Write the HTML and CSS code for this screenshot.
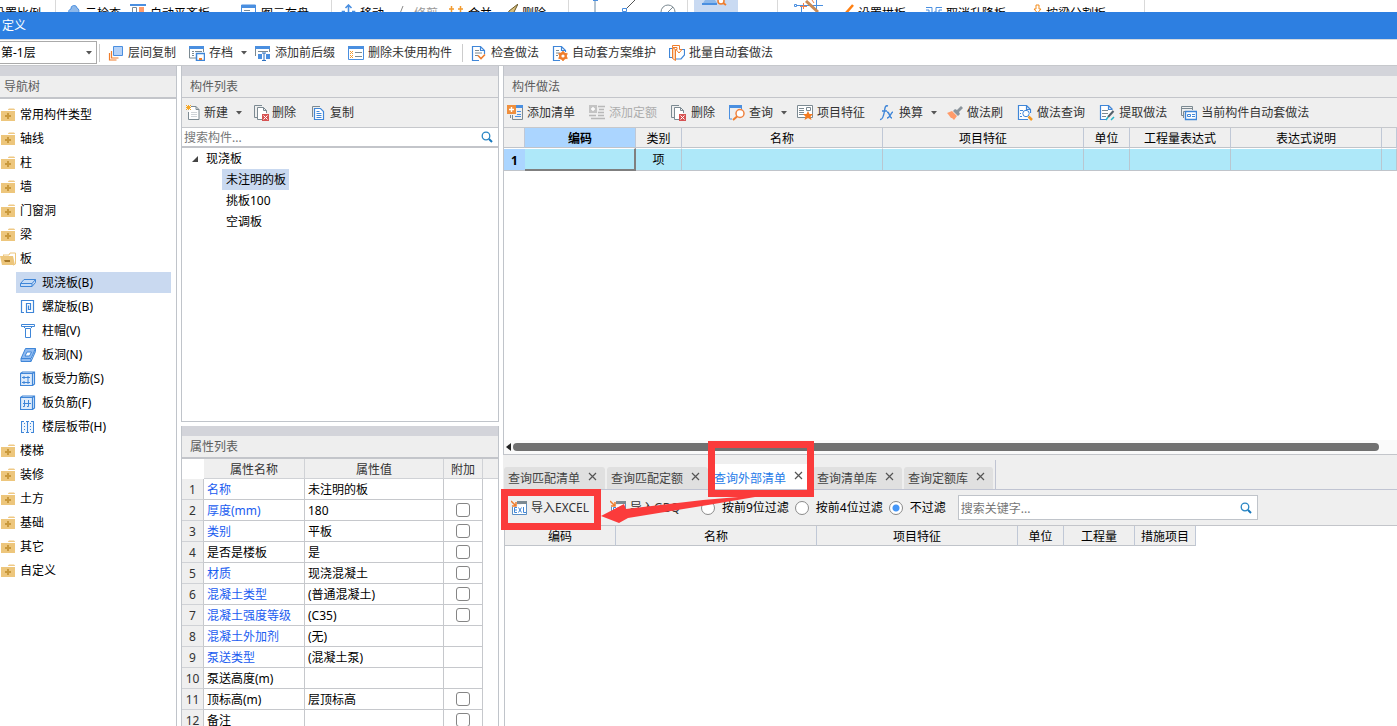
FILE: index.html
```html
<!DOCTYPE html>
<html lang="zh-CN">
<head>
<meta charset="utf-8">
<title>定义</title>
<link rel="stylesheet" href="styles.css">
</head>
<body>
<svg class="sprite" aria-hidden="true">
  <symbol id="folder" viewBox="0 0 16 16"><path d="M8 2.500l1-1h5l1 1V3H8z" fill="#efc985"/><path d="M1 4h14v10H1z" fill="#edc67c"/><path d="M7 6h2v2h2v2H9v2H7v-2H5V8h2z" fill="#c9993d"/></symbol>
  <symbol id="folder-open" viewBox="0 0 16 16"><path d="M3 4h6l1-2h5.500v11l-2 1z" fill="#fff" stroke="#edc67c"/><path d="M0 5h13l2 9H2z" fill="#edc67c"/><path d="M4 9h6v2H5z" fill="#a87a2a"/></symbol>
  <symbol id="search" viewBox="0 0 12 12"><circle cx="5" cy="5" r="3.800" fill="none" stroke="#2a86c4" stroke-width="1.300"/><path d="M8 8l3 3" stroke="#1778bd" stroke-width="2"/></symbol>
  <symbol id="caret" viewBox="0 0 6 4"><path d="M0 0h6L3 3.500z" fill="#555"/></symbol>
  <symbol id="close" viewBox="0 0 9 9"><path d="M1 1l7 7M8 1L1 8" stroke="#555" stroke-width="1.200"/></symbol>
  <symbol id="delete" viewBox="0 0 16 16"><path d="M3 12.500H.5V.5H8" fill="none" stroke="#7c8a92"/><path d="M8 14.500H3.500V2.500H9.500L12.500 5.500V8M9.500 2.500v3h3" fill="#fff" stroke="#7c8a92"/><path d="M8 9h7v7H8z" fill="#d65353"/><path d="M9.500 10.500l4 4M13.500 10.500l-4 4" stroke="#fff"/></symbol>
</svg>

<div class="ribbon" aria-hidden="true">
  <div class="rgroup rg-scale"><span>设置比例</span></div>
  <div class="rgroup rg-check">
    <span class="ritem"><svg width="13" height="12" viewBox="0 0 13 12"><path d="M1 9a3 3 0 0 1 2-4 3 3 0 0 1 6-1 3 3 0 0 1 1 5v3H1z" fill="#8db8ea" stroke="#4a8fe0"/></svg>云检查</span>
    <span class="ritem"><svg width="16" height="12" viewBox="0 0 16 12"><path d="M0 1h16" stroke="#4a8fe0" stroke-width="2"/><path d="M2.500 3.500h4V12h-4z" fill="none" stroke="#7c8a92"/><path d="M9 3h5v9H9z" fill="#ff9b6a"/></svg>自动平齐板</span>
    <span class="ritem"><svg width="16" height="12" viewBox="0 0 16 12"><path d="M.5 1h14v11H.5z" fill="#fff" stroke="#4a8fe0"/><path d="M0 1h15v3H0z" fill="#4a8fe0"/><path d="M3 6.500h6M3 9.500h6" stroke="#7c8a92"/></svg>图元存盘</span>
  </div>
  <div class="rgroup rg-edit">
    <span class="ritem"><svg width="15" height="12" viewBox="0 0 15 12"><path d="M7.500 1v8M4.500 4l3-3 3 3M1.500 12V7.500H4M13.500 12V7.500H11" fill="none" stroke="#4a8fe0" stroke-width="1.600"/></svg>移动</span>
    <span class="ritem dim"><svg width="12" height="12" viewBox="0 0 12 12"><path d="M5 2L1 12" stroke="#8a8a8a"/></svg>修剪</span>
    <span class="ritem"><svg width="15" height="12" viewBox="0 0 15 12"><path d="M0 5h5M2.500 2v6M9 5h5M11.500 2v6" stroke="#f29a2e" stroke-width="1.500"/></svg>合并</span>
    <span class="ritem"><svg width="12" height="12" viewBox="0 0 12 12"><path d="M12 0L3 7l-2 5h5z" fill="#d8bd7a" stroke="#6b5a2a"/></svg>删除</span>
  </div>
  <div class="rgroup rg-draw">
    <svg width="10" height="12" viewBox="0 0 10 12"><path d="M5 0v12" stroke="#6b8ba5"/><path d="M3 0h5v1H3z" fill="#4a8fe0"/></svg>
    <svg width="16" height="12" viewBox="0 0 16 12"><path d="M4 9L13 0" stroke="#555"/><path d="M.5 8.500h4v3h-4z" fill="#fff" stroke="#4a8fe0"/></svg>
    <svg width="16" height="12" viewBox="0 0 16 12"><circle cx="8" cy="12" r="7" fill="none" stroke="#7c8a92"/><path d="M8 12l5-5" stroke="#7c8a92"/></svg>
  </div>
  <div class="rgroup rg-pick"><span class="picked"><svg width="26" height="10" viewBox="0 0 26 10"><path d="M3 0h10l2 3H1z" fill="#8db8ea"/><path d="M0 4h15" stroke="#4a8fe0" stroke-width="2"/><circle cx="19" cy="1" r="3" fill="#fff" stroke="#ef7d2c" stroke-width="1.500"/><path d="M21 3l3 2" stroke="#ef7d2c" stroke-width="2"/></svg></span></div>
  <div class="rgroup rg-slab">
    <span class="ritem"><svg width="29" height="12" viewBox="0 0 29 12"><path d="M1 5.500h28M7.500 12V7M22.500 0v12" stroke="#4a8fe0"/><path d="M.5 4.500h2v2h-2z" fill="#fff" stroke="#4a8fe0"/><path d="M12 1l12 11" stroke="#c98a55" stroke-width="3"/><path d="M9.500 3v6M6 6.500h7M18 0l2 3" stroke="#f0804a"/></svg></span>
    <span class="ritem"><svg width="9" height="12" viewBox="0 0 9 12"><path d="M8 1L1 9" stroke="#ff7f11" stroke-width="2.500"/></svg>设置拱板</span>
    <span class="ritem"><svg width="16" height="12" viewBox="0 0 16 12"><path d="M0 3.500h6V12M3 12V6H0M16 3.500h-6V8H8M13 12V6h3" fill="none" stroke="#4a8fe0"/></svg>取消升降板</span>
    <span class="ritem"><svg width="9" height="12" viewBox="0 0 9 12"><path d="M3 1h3v4h2L4.500 9 1 5h2z" fill="#fff" stroke="#f28c1c"/></svg>按梁分割板</span>
  </div>
</div>

<header class="titlebar"><h1>定义</h1></header>

<div class="toolbar main-tools">
  <label class="floor"><select aria-label="楼层"><option>第-1层</option></select><svg class="caret" width="6" height="4"><use href="#caret"/></svg></label>
  <i class="sep"></i>
  <button><svg width="16" height="16" viewBox="0 0 16 16"><path d="M1.500 8v7h7M3.500 6v7h7" fill="none" stroke="#ef7d2c" stroke-width="1.200"/><path d="M5.500 1.500h9v9h-9z" fill="#b5d2f8" stroke="#4a8fe0"/></svg>层间复制</button>
  <button class="menu"><svg width="16" height="16" viewBox="0 0 16 16"><path d="M.5 2v11H8M14.500 2v5" fill="none" stroke="#7c8a92"/><path d="M0 1h15v3H0z" fill="#4a8fe0"/><path d="M3 6.500h2M6 6.500h7M3 8.500h2M3 10.500h2" stroke="#7c8a92"/><path d="M7.500 8.500h8v7h-8z" fill="#fff" stroke="#3f86d8" stroke-width="1.500"/><path d="M10 13h3v2h-3z" fill="#ef7d2c"/></svg>存档<svg class="caret" width="6" height="4"><use href="#caret"/></svg></button>
  <button><svg width="16" height="16" viewBox="0 0 16 16"><path d="M.5 2v9M14.500 2v5" stroke="#7c8a92"/><path d="M0 1h15v3H0z" fill="#4a8fe0"/><path d="M3 6.500h10" stroke="#7c8a92"/><path d="M3 9h4v5H3zM11 9h4v5h-4z" fill="#4a8fe0"/><path d="M9 8v8M7 8h4M7 15.500h4" stroke="#2b6fbf"/></svg>添加前后缀</button>
  <button><svg width="16" height="16" viewBox="0 0 16 16"><path d="M.5 1.500h15v13H.5z" fill="#fff" stroke="#4a8fe0"/><path d="M0 1h16v3H0z" fill="#4a8fe0"/><path d="M2 6l3 3M5 6L2 9M2 10l3 3M5 10l-3 3" stroke="#f29a2e"/><path d="M7 7.500h7M7 11.500h7" stroke="#7c8a92"/></svg>删除未使用构件</button>
  <i class="sep"></i>
  <button><svg width="16" height="16" viewBox="0 0 16 16"><path d="M8 15.500H1.500V1.500h8l4 4V9M9.500 1.500v4h4" fill="#fff" stroke="#3f86d8" stroke-width="1.200"/><path d="M4 5.500h4M4 8h7M4 10.500h3" stroke="#7c8a92"/><path d="M7 10.500l3 3 4-4" fill="none" stroke="#ef7d2c" stroke-width="1.600"/></svg>检查做法</button>
  <button><svg width="16" height="16" viewBox="0 0 16 16"><path d="M8 15.500H1.500V1.500h8l4 4V7M9.500 1.500v4h4" fill="#fff" stroke="#3f86d8" stroke-width="1.200"/><path d="M4 5.500h3M4 8h4M4 10.500h2" stroke="#7c8a92"/><circle cx="11" cy="11" r="2.800" fill="#fff" stroke="#ef7d2c" stroke-width="2.400"/><path d="M11 6v2M11 14v2M6.500 8.500l2 1M13.500 12.500l2 1M15.500 8.500l-2 1M8.500 12.500l-2 1" stroke="#ef7d2c" stroke-width="1.600"/></svg>自动套方案维护</button>
  <button><svg width="16" height="16" viewBox="0 0 16 16"><path d="M3 3.500H.5v9H3M12 4.500h3.500V10L12 14H7" fill="none" stroke="#3f86d8" stroke-width="1.200"/><path d="M3.500 2.500l3 2v11l-3-2z" fill="#f9d3b5" stroke="#ef7d2c"/><path d="M3.500 2.500V.5h7v4h2.500L10 8 7 4.500h1v-2H4" fill="#fff" stroke="#ef7d2c"/></svg>批量自动套做法</button>
</div>

<main class="workspace">
  <nav class="panel nav">
    <div class="band"></div>
    <h2 class="thick">导航树</h2>
    <ul class="navtree">
      <li><svg><use href="#folder"/></svg>常用构件类型</li>
      <li><svg><use href="#folder"/></svg>轴线</li>
      <li><svg><use href="#folder"/></svg>柱</li>
      <li><svg><use href="#folder"/></svg>墙</li>
      <li><svg><use href="#folder"/></svg>门窗洞</li>
      <li><svg><use href="#folder"/></svg>梁</li>
      <li><svg><use href="#folder-open"/></svg>板</li>
      <li class="child"><span class="leaf on"><svg viewBox="0 0 16 16"><path d="M.5 8.500L4 4.500h11.500L12 8.500zM.5 8.500v3H12v-3M12 11.500l3.500-4v-3" fill="#c5dcf7" stroke="#3f86d8"/></svg>现浇板(B)</span></li>
      <li class="child"><span class="leaf"><svg viewBox="0 0 16 16"><path d="M4 13.500H1.500v-12h12v12h-7v-9h4v6h-2v-4" fill="none" stroke="#3f86d8" stroke-width="1.200"/></svg>螺旋板(B)</span></li>
      <li class="child"><span class="leaf"><svg viewBox="0 0 16 16"><path d="M1.500 1.500h13v2h-13zM3.500 3.500l2 2h5l2-2M5.500 5.500v9h5v-9" fill="#fff" stroke="#3f86d8"/></svg>柱帽(V)</span></li>
      <li class="child"><span class="leaf"><svg viewBox="0 0 16 16"><path d="M1 11.500L5.500 1.500h10L11 11.500zM1 11.500v3h10v-3M11 14.500l4.500-10v-3" fill="#8fbaf0" stroke="#3f86d8"/><path d="M5 9l2-4h4.500L9.500 9z" fill="#fff" stroke="#3f86d8"/></svg>板洞(N)</span></li>
      <li class="child"><span class="leaf"><svg viewBox="0 0 16 16"><path d="M.5 2.500h12v12H.5zM.5 2.500l2-1.500h12v12l-2 1.500M12.500 2.500l2-1.500" fill="#deebfb" stroke="#3f86d8" stroke-width="1.200"/><path d="M2 6.500h8M2 11.500h8M4 5v3M8 5v8M4 10v3" stroke="#3f86d8"/></svg>板受力筋(S)</span></li>
      <li class="child"><span class="leaf"><svg viewBox="0 0 16 16"><path d="M.5 2.500h12v12H.5zM.5 2.500l2-1.500h12v12l-2 1.500M12.500 2.500l2-1.500" fill="#deebfb" stroke="#3f86d8" stroke-width="1.200"/><path d="M4.500 5v6.500H3M8.500 5v6.500H7M3 8.500h8" stroke="#3f86d8" fill="none"/></svg>板负筋(F)</span></li>
      <li class="child"><span class="leaf"><svg viewBox="0 0 16 16"><path d="M1 3h13v10H1z" fill="#eef5fd"/><path d="M1.500 3v10M7.500 3v10M13.500 3v10M1 2.500h3M6 2.500h3M11 2.500h3M1 13.500h3M6 13.500h3M11 13.500h3" stroke="#3f86d8"/><path d="M4.500 4v9M10.500 4v9" stroke="#3f86d8" stroke-dasharray="1 2"/></svg>楼层板带(H)</span></li>
      <li><svg><use href="#folder"/></svg>楼梯</li>
      <li><svg><use href="#folder"/></svg>装修</li>
      <li><svg><use href="#folder"/></svg>土方</li>
      <li><svg><use href="#folder"/></svg>基础</li>
      <li><svg><use href="#folder"/></svg>其它</li>
      <li><svg><use href="#folder"/></svg>自定义</li>
    </ul>
  </nav>

  <div class="middle">
    <section class="panel components">
      <div class="band"></div>
      <h2>构件列表</h2>
      <div class="toolbar">
        <button class="menu"><svg width="16" height="16" viewBox="0 0 16 16"><path d="M5 1.500h5l3 3v10H2.500V7M10 1.500v3h3" fill="#fff" stroke="#7c8a92"/><path d="M5 7.500h6M5 9.500h6M5 11.500h6" stroke="#d0d4d8"/><path d="M0 0l5 5M5 0L0 5M2.500 0v5M0 2.500h5" stroke="#f5a623"/></svg>新建<svg class="caret" width="6" height="4"><use href="#caret"/></svg></button>
        <button><svg width="16" height="16"><use href="#delete"/></svg>删除</button>
        <button><svg width="16" height="16" viewBox="0 0 16 16"><path d="M.5 12V1.500H8" fill="none" stroke="#7c8a92"/><path d="M2.500 3.500h6l3 3v8h-9z" fill="#fff" stroke="#3f86d8" stroke-width="1.200"/><path d="M4.500 6.500h3M4.500 8.500h5M4.500 10.500h5M4.500 12.500h5" stroke="#3f86d8"/></svg>复制</button>
      </div>
      <label class="find"><input type="text" placeholder="搜索构件..." aria-label="搜索构件"><svg width="12" height="12"><use href="#search"/></svg></label>
      <ul class="comptree">
        <li><svg width="8" height="8" viewBox="0 0 8 8"><path d="M7 1v6H1z" fill="#444"/></svg>现浇板</li>
        <li class="child"><span class="on">未注明的板</span></li>
        <li class="child"><span>挑板100</span></li>
        <li class="child"><span>空调板</span></li>
      </ul>
    </section>

    <section class="panel props">
      <div class="band"></div>
      <h2 class="thick">属性列表</h2>
      <div class="props-body">
      <table class="proptable">
        <colgroup><col class="w22"><col class="w101"><col class="w139"><col class="w39"><col></colgroup>
        <thead><tr><td></td><th>属性名称</th><th>属性值</th><th>附加</th><th class="rest"></th></tr></thead>
        <tbody>
          <tr><th>1</th><td class="link">名称</td><td>未注明的板</td><td></td></tr>
          <tr><th>2</th><td class="link">厚度(mm)</td><td>180</td><td><input type="checkbox" aria-label="厚度附加"></td></tr>
          <tr><th>3</th><td class="link">类别</td><td>平板</td><td><input type="checkbox" aria-label="类别附加"></td></tr>
          <tr><th>4</th><td>是否是楼板</td><td>是</td><td><input type="checkbox" aria-label="是否是楼板附加"></td></tr>
          <tr><th>5</th><td class="link">材质</td><td>现浇混凝土</td><td><input type="checkbox" aria-label="材质附加"></td></tr>
          <tr><th>6</th><td class="link">混凝土类型</td><td>(普通混凝土)</td><td><input type="checkbox" aria-label="混凝土类型附加"></td></tr>
          <tr><th>7</th><td class="link">混凝土强度等级</td><td>(C35)</td><td><input type="checkbox" aria-label="混凝土强度等级附加"></td></tr>
          <tr><th>8</th><td class="link">混凝土外加剂</td><td>(无)</td><td></td></tr>
          <tr><th>9</th><td class="link">泵送类型</td><td>(混凝土泵)</td><td></td></tr>
          <tr><th>10</th><td>泵送高度(m)</td><td></td><td></td></tr>
          <tr><th>11</th><td>顶标高(m)</td><td>层顶标高</td><td><input type="checkbox" aria-label="顶标高附加"></td></tr>
          <tr><th>12</th><td>备注</td><td></td><td><input type="checkbox" aria-label="备注附加"></td></tr>
        </tbody>
      </table>
      </div>
    </section>
  </div>

  <div class="right">
    <section class="methods">
      <div class="band"></div>
      <h2>构件做法</h2>
      <div class="toolbar">
        <button><svg width="16" height="16" viewBox="0 0 16 16"><path d="M8 .5h7.500v3M15.500 3v11.500h-10V10M3.500 10v3" fill="none" stroke="#7c8a92"/><path d="M9 0h7v3H9z" fill="#4a8fe0"/><path d="M10 6.500h4M10 9.500h4M8 11.500h6" stroke="#4a8fe0"/><path d="M0 0h9v9H0z" fill="#ef8f3d"/><path d="M4.500 2v5M2 4.500h5" stroke="#fff" stroke-width="1.400"/></svg>添加清单</button>
        <button disabled><svg width="16" height="16" viewBox="0 0 16 16"><path d="M0 0h8v8H0z" fill="#c4c4c4"/><path d="M4 2v4M2 4h4" stroke="#fff" stroke-width="1.400"/><path d="M9 1.500h7M10 4.500h5M9 7.500h6M0 10.500h7M9 10.500h6M2 13.500h14" stroke="#b8b8b8" stroke-width="1.500"/></svg>添加定额</button>
        <button><svg width="16" height="16"><use href="#delete"/></svg>删除</button>
        <button class="menu"><svg width="16" height="16" viewBox="0 0 16 16"><path d="M.5 1v13H3M12.500 1v3" stroke="#4a8fe0" fill="none"/><path d="M0 0h13v3H0z" fill="#4a8fe0"/><circle cx="11" cy="8.500" r="4" fill="#fff" stroke="#ef8240" stroke-width="1.500"/><path d="M8 11.500L4 15" stroke="#ef7d2c" stroke-width="2"/></svg>查询<svg class="caret" width="6" height="4"><use href="#caret"/></svg></button>
        <button><svg width="16" height="16" viewBox="0 0 16 16"><path d="M.5.5h15v12H.5z" fill="#fff" stroke="#7c8a92"/><path d="M2 3.500h5M2 5.500h5M2 7.500h5M2 9.500h5M9.500 2.500h4v3h-4z" fill="none" stroke="#7c8a92"/><path d="M11 6l1.500 3H16l-2.500 2.500 1 3.500-3.500-2-3.500 2 1-3.500L6 9h3.500z" fill="#f47b20"/></svg>项目特征</button>
        <button class="menu"><svg width="16" height="16" viewBox="0 0 16 16"><path d="M9 1C6 0 6 3 5.500 6S4 15 1 14.500M3 6h5M8 7c3 0 2 6 5 6M14 7c-2 0-3 6-6 6" fill="none" stroke="#3f86d8" stroke-width="1.400"/></svg>换算<svg class="caret" width="6" height="4"><use href="#caret"/></svg></button>
        <button><svg width="16" height="16" viewBox="0 0 16 16"><path d="M14 1l2 2-4 4 1 2-2 2-5-5 2-2 2 1z" fill="#8a949c"/><path d="M5 6l5 5-3 4-2-2-1 0-3-4-1-1z" fill="#ff9b6a"/></svg>做法刷</button>
        <button><svg width="16" height="16" viewBox="0 0 16 16"><path d="M11 14.500H1.500V.5h8l4 4V8M9.500.5v4h4" fill="#fff" stroke="#3f86d8" stroke-width="1.200"/><path d="M3 5.500h3M3 8.500h1M3 11.500h2" stroke="#3f86d8"/><circle cx="9" cy="8.500" r="3.200" fill="#fff" stroke="#3f86d8"/><path d="M11.500 11.500L15 15" stroke="#f59a23" stroke-width="2.500"/></svg>做法查询</button>
        <button><svg width="16" height="16" viewBox="0 0 16 16"><path d="M7 14.500H1.500V.5h8l4 4M9.500.5v4h4" fill="#fff" stroke="#3f86d8" stroke-width="1.200"/><path d="M3 5.500h6M3 8.500h6M3 11.500h4" stroke="#7c8a92"/><path d="M14.500 6L9 12" stroke="#53616b" stroke-width="2"/><path d="M9 12l-2 3M12 15l3-3" stroke="#26b5c8" stroke-width="1.500"/></svg>提取做法</button>
        <button><svg width="16" height="16" viewBox="0 0 16 16"><path d="M3 10.500H.5V1.500h11V5M0 3.500h12M2.500 13V6.500H4" fill="none" stroke="#7c8a92"/><path d="M4.500 6.500h11v8h-11z" fill="#fff" stroke="#3f86d8" stroke-width="1.400"/><path d="M6.500 9.500h3v2h-3zM11 9.500h3M11 11.500h3" fill="none" stroke="#3f86d8"/></svg>当前构件自动套做法</button>
      </div>
      <table class="grid wide">
        <colgroup><col class="w21"><col class="w111"><col class="w46"><col class="w201"><col class="w201"><col class="w46"><col class="w101"><col class="w151"><col></colgroup>
        <thead><tr><td></td><th class="current">编码</th><th>类别</th><th>名称</th><th>项目特征</th><th>单位</th><th>工程量表达式</th><th>表达式说明</th><th></th></tr></thead>
        <tbody><tr><th>1</th><td class="cursor"></td><td>项</td><td></td><td></td><td></td><td></td><td></td><td></td></tr></tbody>
      </table>
      <div class="scroller"><svg width="5" height="8" viewBox="0 0 5 8"><path d="M5 0v8L0 4z" fill="#222"/></svg><span class="thumb"></span></div>
    </section>

    <section class="query">
      <div class="tabs" role="tablist">
        <button role="tab">查询匹配清单<svg width="9" height="9"><use href="#close"/></svg></button>
        <button role="tab">查询匹配定额<svg width="9" height="9"><use href="#close"/></svg></button>
        <button role="tab" aria-selected="true">查询外部清单<svg width="9" height="9"><use href="#close"/></svg></button>
        <button role="tab">查询清单库<svg width="9" height="9"><use href="#close"/></svg></button>
        <button role="tab">查询定额库<svg width="9" height="9"><use href="#close"/></svg></button>
        <i class="tabs-end"></i>
      </div>
      <div class="filters">
        <button><svg width="16" height="16" viewBox="0 0 16 16"><path d="M1.500 7v7.500h14V3" fill="#fff" stroke="#5b8fc4"/><path d="M6 1h10v3H6z" fill="#7c8a92"/><path d="M0 1l5 5M5 2v4H1" fill="none" stroke="#ef7d2c" stroke-width="1.500"/><path d="M6 7.500H3.500v5H6M3.500 10H6M7.500 7.500l3 5M10.500 7.500l-3 5M12.500 7v5.500H15" fill="none" stroke="#3f86d8"/></svg>导入EXCEL</button>
        <button><svg width="16" height="16" viewBox="0 0 16 16"><path d="M1.500 7v7.500h14V3" fill="#fff" stroke="#5b8fc4"/><path d="M6 1h10v3H6z" fill="#7c8a92"/><path d="M0 1l5 5M5 2v4H1" fill="none" stroke="#ef7d2c" stroke-width="1.500"/><path d="M6 7.500H3.500v5H6V10M8 7.500h2v5H8zM12 7.500h2v5h-2z" fill="none" stroke="#3f86d8"/></svg>导入GBQ</button>
        <div class="radios">
          <label><input type="radio" name="f">按前9位过滤</label>
          <label><input type="radio" name="f">按前4位过滤</label>
          <label><input type="radio" name="f" checked>不过滤</label>
        </div>
        <label class="find boxed"><input type="text" placeholder="搜索关键字..." aria-label="搜索关键字"><svg width="12" height="12"><use href="#search"/></svg></label>
      </div>
      <div class="results">
        <table class="grid">
          <colgroup><col class="w111"><col class="w201"><col class="w201"><col class="w46"><col class="w71"><col class="w61"></colgroup>
          <thead><tr><th>编码</th><th>名称</th><th>项目特征</th><th>单位</th><th>工程量</th><th>措施项目</th></tr></thead>
        </table>
      </div>
      <svg class="marks" width="320" height="100" viewBox="0 0 320 100" aria-hidden="true">
        <path d="M1.500 37.500h93v34h-93zM208.500-10.500h99v49h-99z" fill="none" stroke="#fb3b3b" stroke-width="7"/>
        <path d="M98 61L121 49L123 54L200 45L247 41L252 42L205 50L125 63L116 68z" fill="#fb3b3b"/>
      </svg>
    </section>
  </div>
</main>
</body>
</html>
```
FILE: styles.css
```css
* { box-sizing: border-box; }

body {
  margin: 0;
  height: 100vh;
  display: flex;
  flex-direction: column;
  overflow: hidden;
  background: #fff;
  color: #000;
  font: 12px/20px "Noto Sans", "Noto Sans CJK SC", sans-serif;
}

button, input, select { font: inherit; color: inherit; margin: 0; }
button { border: 0; padding: 0; background: none; white-space: nowrap; }
h1, h2, ul { margin: 0; padding: 0; font-size: 12px; font-weight: 400; list-style: none; }
svg { flex: none; display: block; }
.sprite { width: 0; height: 0; position: absolute; }

/* Ribbon, mostly covered by the definition window */
.ribbon { height: 12px; flex: none; display: flex; overflow: hidden; white-space: nowrap; }
.rgroup { flex: none; border-right: 1px solid #d9d9d9; display: grid; align-items: start; }
.rgroup > span { padding-top: 4px; }
.rg-scale { width: 56px; justify-content: end; padding-right: 14px; }
.rg-check { width: 276px; padding-left: 12px; grid-template-columns: 62px 111px auto; }
.rg-edit { width: 237px; padding-left: 9px; grid-template-columns: 57px 51px 57px auto; }
.rg-draw { width: 119px; padding-left: 21px; grid-template-columns: 32px 38px auto; }
.rg-pick { width: 90px; padding-left: 6px; }
.rg-slab { width: 367px; padding-left: 16px; grid-template-columns: 51px 81px 107px auto; }
.ritem { display: flex; gap: 4px; }
.rg-slab > span:first-child, .rg-pick > span { padding-top: 0; }
.dim { color: #999; }
.picked { width: 44px; height: 12px; background: #c9daf2; padding-left: 8px; }

.titlebar { flex: none; height: 27px; padding: 4px 2px; background: #2d7fe1; color: #fff; }

.toolbar { display: flex; align-items: center; }
.toolbar button { display: flex; align-items: center; gap: 4px; height: 22px; padding: 0 6px; color: #333; }
.toolbar button:disabled { color: #adadad; }
.toolbar .caret { margin-left: 4px; }
.main-tools { flex: none; height: 27px; gap: 1px; border-top: 1px solid #d5d9de; border-bottom: 1px solid #c6c8cc; }
.main-tools .menu { padding-right: 1px; }
.main-tools .sep { width: 1px; height: 18px; margin: 0 1px 0 3px; background: #ccc; }
.main-tools .floor + .sep { margin-left: 1px; }
.floor { position: relative; width: 97px; }
.floor select { appearance: none; display: block; width: 100%; height: 23px; padding: 0 1px; border: 1px solid #aaa; border-left: 0; border-radius: 0; background: #fff; }
.floor .caret { position: absolute; right: 5px; top: 10px; }

/* Workspace columns */
.workspace { flex: 1; min-height: 0; display: grid; grid-template-columns: 177px 318px minmax(0, 1fr); gap: 4px; }
.band { flex: none; height: 10px; background: #d3d4da; }
h2 { flex: none; height: 22px; padding: 1px 8px 0; background: #eee; color: #5c5c5c; border-bottom: 1px solid #c3c5ca; }
h2.thick { height: 23px; border-bottom-width: 2px; }
.panel { display: flex; flex-direction: column; min-height: 0; overflow: hidden; border-right: 1px solid #c0c4ca; }
.nav h2 { padding-left: 4px; }

.navtree { padding-top: 4px; }
.navtree li { height: 24px; display: flex; align-items: center; gap: 4px; }
.navtree svg { width: 16px; height: 16px; }
.navtree .child { padding-left: 16px; }
.leaf { flex: 1; height: 21px; margin: 0 5px 2px 0; padding: 2px 0 0 4px; display: flex; align-items: center; gap: 6px; }
.on { background: #c9d9f0; }

.middle { min-height: 0; display: grid; grid-template-rows: minmax(0, 356fr) minmax(0, 300fr); gap: 4px; }
.middle .panel { border-left: 1px solid #c0c4ca; }
.components { border-bottom: 1px solid #c0c4ca; }
.components .toolbar, .methods .toolbar { flex: none; height: 30px; background: #efefef; border-bottom: 1px solid #c6c8cc; }
.components .toolbar { gap: 4px; }
.components .toolbar button { gap: 2px; }
.components .toolbar .menu { padding: 0 2px 0 4px; }
.components .toolbar .caret { margin-left: 6px; }

.find { flex: none; display: flex; align-items: center; height: 20px; padding-right: 5px; background: #fff; border-bottom: 2px solid #c3c5ca; }
.find input { flex: 1; min-width: 0; height: 18px; padding: 2px 2px 0; border: 0; outline: 0; background: none; }
.find input::placeholder { color: #777; opacity: 1; }
.find.boxed { width: 300px; height: 25px; border: 1px solid #c0c4ca; margin-left: 12px; }

.comptree li { height: 21px; display: flex; align-items: center; gap: 7px; padding-left: 9px; }
.comptree .child { padding-left: 40px; }
.comptree span { padding: 0 3px 0 4px; line-height: 21px; }

table { border-collapse: separate; border-spacing: 0; table-layout: fixed; }
th { font-weight: 400; }
th, td { padding: 2px 0 0; line-height: 18px; white-space: nowrap; }
.w21 { width: 21px; } .w22 { width: 22px; } .w39 { width: 39px; } .w46 { width: 46px; }
.w61 { width: 61px; } .w71 { width: 71px; } .w101 { width: 101px; } .w111 { width: 111px; }
.w139 { width: 139px; } .w151 { width: 151px; } .w201 { width: 201px; }

.props-body { min-height: 0; overflow: hidden; }
.proptable { width: 100%; }
.proptable thead th { line-height: 17px; background: #efefef; color: #333; border-right: 1px solid #d0d2d6; border-bottom: 1px solid #d0d2d6; }
.proptable thead .rest { border-right: 0; }
.proptable tbody th { background: #efefef; color: #333; border-right: 1px solid #c6c8cc; border-bottom: 1px solid #d0d2d6; }
.proptable tbody td { padding-left: 3px; border-right: 1px solid #c6c8cc; border-bottom: 1px solid #c6c8cc; }
.proptable tbody td:last-child { padding: 0 1px 0 0; }
.proptable .link { color: #1a5cf0; }
.proptable tbody tr { height: 21px; }
input[type="checkbox"] { appearance: none; display: block; width: 14px; height: 14px; margin: 0 auto; border: 1px solid #858585; border-radius: 3px; background: #fff; }

.right { min-height: 0; display: grid; grid-template-rows: minmax(0, 389fr) minmax(0, 271fr); }
.methods { display: flex; flex-direction: column; min-height: 0; border-left: 1px solid #c0c4ca; border-bottom: 1px solid #c3c5ca; }
.methods .toolbar { gap: 2px; overflow: hidden; }
.methods .toolbar button:first-child { padding-left: 3px; }
.methods .toolbar .menu { padding-right: 2px; }
.grid { flex: none; }
.wide { width: 100%; }
.grid thead th, .grid thead td { line-height: 17px; background: #efefef; border-right: 1px solid #c0c8d6; border-bottom: 1px solid #c0c4ca; }
.grid thead .current { background: #abd5ff; font-weight: 700; }
.grid tbody th { background: #abd5ff; font-weight: 700; border-top: 1px solid #fff; border-bottom: 1px solid #c0c4ca; }
.grid tbody td { height: 23px; padding: 0; text-align: center; background: #aee8f9; border-top: 1px solid #fff; border-right: 1px solid #b9c6d0; border-bottom: 1px solid #c0c4ca; }
.grid tbody .cursor { border-right: 2px solid #7f7f7f; border-bottom: 2px solid #7f7f7f; }
.scroller { margin-top: auto; height: 14px; padding: 0 18px 0 2px; display: flex; align-items: center; gap: 2px; background: #fafafa; }
.thumb { flex: 1; height: 8px; border-radius: 4px; background: #707070; }

.query { position: relative; display: flex; flex-direction: column; min-height: 0; }
.tabs { flex: none; height: 35px; padding-left: 1px; display: flex; align-items: flex-end; gap: 2px; background: #efefef; border-bottom: 1px solid #c0c4d2; }
.tabs button { display: flex; align-items: center; gap: 8px; height: 22px; padding: 2px 8px 0 4px; background: #e0e0e0; color: #444; border-radius: 3px 3px 0 0; }
.tabs button svg { margin-bottom: 6px; }
.tabs button[aria-selected="true"] { height: 25px; padding-top: 4px; background: #fff; color: #1f7be8; }
.tabs-end { width: 1px; height: 29px; background: #c0c4d2; }
.filters { flex: none; height: 36px; padding-left: 8px; display: flex; align-items: center; background: #efefef; border-bottom: 1px solid #c3c5ca; }
.filters button { display: flex; align-items: center; gap: 4px; margin-right: 21px; color: #333; }
.radios { display: flex; gap: 6px; }
.radios label { display: flex; align-items: center; gap: 7px; white-space: nowrap; }
input[type="radio"] { appearance: none; width: 14px; height: 14px; border: 1px solid #8a8a8a; border-radius: 50%; background: #fff; }
input[type="radio"]:checked { background: radial-gradient(circle, #4596f7 3px, #fff 4px); }
.results { flex: 1; min-height: 0; margin-left: 1px; border-left: 1px solid #c0c4ca; }
.results .grid { width: 691px; }

/* Highlight marks laid over the tab strip and import button */
.marks { position: absolute; left: 0; top: 0; overflow: visible; pointer-events: none; }
```
